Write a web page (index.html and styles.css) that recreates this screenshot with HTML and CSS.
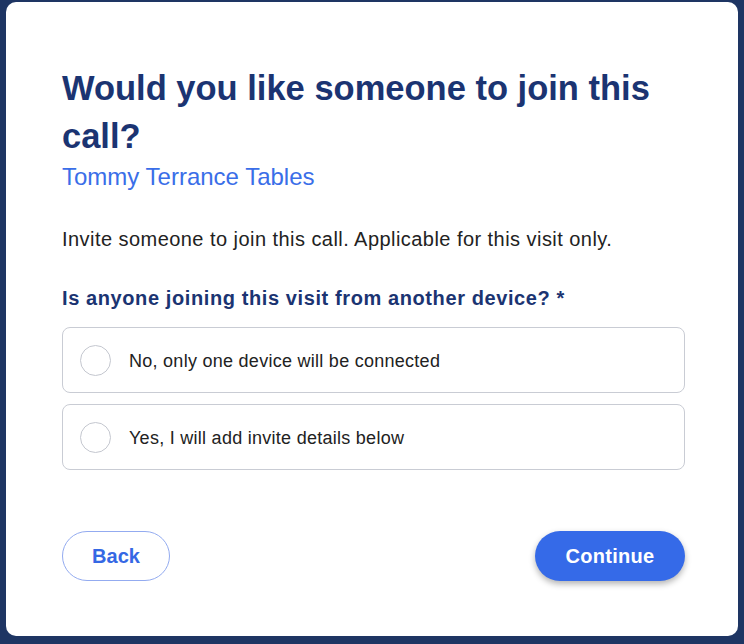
FILE: index.html
```html
<!DOCTYPE html>
<html lang="en">
<head>
<meta charset="utf-8">
<title>Invite</title>
<link rel="stylesheet" href="styles.css">
</head>
<body>
<main class="card">
  <h1 class="title">Would you like someone to join this call?</h1>
  <p class="patient">Tommy Terrance Tables</p>
  <p class="intro">Invite someone to join this call. Applicable for this visit only.</p>
  <fieldset class="question">
    <legend class="question-label">Is anyone joining this visit from another device? *</legend>
    <label class="option">
      <span class="radio"></span>
      <span class="option-text">No, only one device will be connected</span>
    </label>
    <label class="option">
      <span class="radio"></span>
      <span class="option-text">Yes, I will add invite details below</span>
    </label>
  </fieldset>
  <div class="actions">
    <button class="btn btn-back" type="button">Back</button>
    <button class="btn btn-continue" type="button">Continue</button>
  </div>
</main>
</body>
</html>
```
FILE: styles.css
```css
html, body {
  margin: 0;
  padding: 0;
}
body {
  background: #1e3563;
  font-family: "Liberation Sans", Arial, sans-serif;
  width: 744px;
  height: 644px;
  overflow: hidden;
}
.card {
  box-sizing: border-box;
  margin: 2px 6px 0 6px;
  width: 732px;
  height: 634px;
  background: #ffffff;
  border-radius: 10px;
  padding: 62px 53px 0 56px;
  display: flex;
  flex-direction: column;
}
.title {
  margin: 0;
  font-size: 34.5px;
  line-height: 48px;
  font-weight: 700;
  color: #1b3472;
}
.patient {
  margin: 2px 0 0 0;
  font-size: 24px;
  line-height: 30px;
  color: #3a6ee8;
}
.intro {
  margin: 34px 0 0 0;
  font-size: 20px;
  letter-spacing: 0.45px;
  line-height: 26px;
  color: #222;
}
.question {
  border: 0;
  margin: 33px 0 0 0;
  padding: 0;
  display: flex;
  flex-direction: column;
  gap: 11px;
}
.question-label {
  padding: 0;
  margin: 0 0 16px 0;
  font-size: 20px;
  letter-spacing: 0.6px;
  line-height: 26px;
  font-weight: 700;
  color: #1b3472;
}
.option {
  box-sizing: border-box;
  height: 66px;
  border: 1px solid #c9ccd4;
  border-radius: 8px;
  display: flex;
  align-items: center;
  padding-left: 17px;
  gap: 18px;
}
.radio {
  box-sizing: border-box;
  width: 31px;
  height: 31px;
  border: 1px solid #c4c7cf;
  border-radius: 50%;
  flex: none;
}
.option-text {
  font-size: 18px;
  letter-spacing: 0.27px;
  color: #222;
  padding-top: 2px;
}
.actions {
  margin-top: 61px;
  display: flex;
  justify-content: space-between;
}
.btn {
  height: 50px;
  border-radius: 25px;
  font-family: "Liberation Sans", Arial, sans-serif;
  font-size: 20px;
  font-weight: 700;
  cursor: pointer;
}
.btn-back {
  width: 108px;
  background: #fff;
  color: #3568e4;
  border: 1px solid #93abf0;
}
.btn-continue {
  width: 150px;
  background: #356ae8;
  color: #fff;
  border: 0;
  letter-spacing: 0.3px;
  box-shadow: 0 3px 6px rgba(0, 0, 0, 0.3);
}
```
